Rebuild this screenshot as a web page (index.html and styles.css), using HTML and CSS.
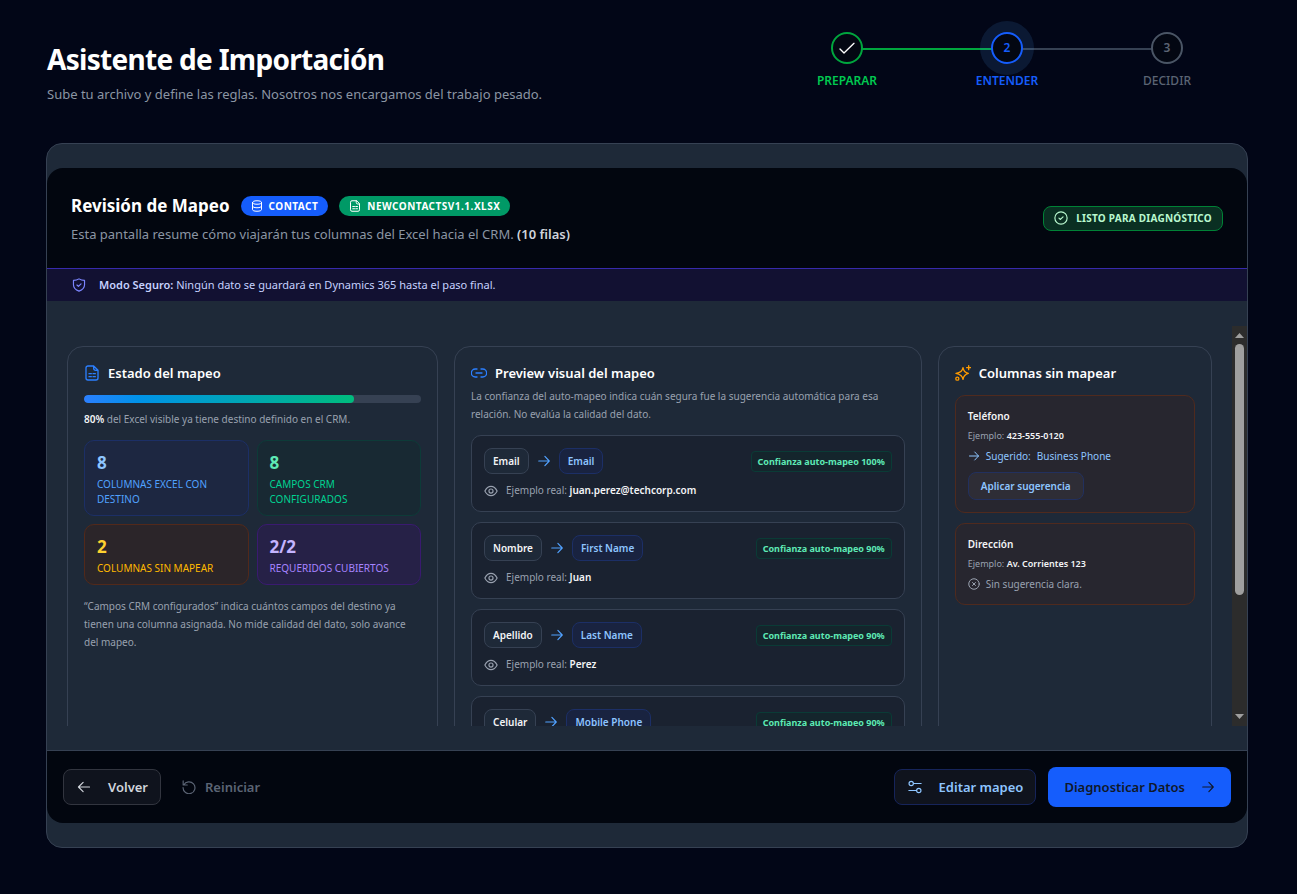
FILE: index.html
```html
<!DOCTYPE html>
<html lang="es">
<head>
  <meta charset="UTF-8" />
  <meta name="viewport" content="width=device-width, initial-scale=1.0" />
  <title>Asistente de Importación</title>
  <link rel="stylesheet" href="styles.css">
</head>
<body>

  <!-- Icon sprite -->
  <svg class="sprite" aria-hidden="true">
    <symbol id="i-check" viewBox="0 0 24 24"><path d="M1.500 13.500l6 6L22.500 5"/></symbol>
    <symbol id="i-database" viewBox="0 0 24 24"><path d="M3 5c0-2 3-3.500 9-3.500S21 3 21 5s-3 3.500-9 3.500S3 7 3 5zM3 5v14c0 2 3 3.500 9 3.500s9-1.500 9-3.500V5M3 12c0 2 3 3.500 9 3.500s9-1.500 9-3.500"/></symbol>
    <symbol id="i-sheet" viewBox="0 0 24 24"><path d="M14.500 1.500H6a3 3 0 0 0-3 3v15a3 3 0 0 0 3 3h12a3 3 0 0 0 3-3V8zM14.500 1.500V5a3 3 0 0 0 3 3H21M7.500 13H11M13.500 13H17M7.500 17.500H11M13.500 17.500H17"/></symbol>
    <symbol id="i-shield" viewBox="0 0 24 24"><path d="M12 1.500c3 2 5.500 2.700 9.500 2.700v7.300c0 5.200-3.800 8.800-9.500 11-5.700-2.200-9.500-5.800-9.500-11V4.200c4 0 6.500-.7 9.500-2.700zM8.500 12l2.500 2.500 4.500-4.500"/></symbol>
    <symbol id="i-circle-check" viewBox="0 0 24 24"><circle cx="12" cy="12" r="10.500"/><path d="M8.500 12.300l2.500 2.200 4.500-4.500"/></symbol>
    <symbol id="i-circle-x" viewBox="0 0 24 24"><circle cx="12" cy="12" r="10.500"/><path d="M9 9l6 6M15 9l-6 6"/></symbol>
    <symbol id="i-link" viewBox="0 0 24 24"><path d="M9 6H6.500a6 6 0 0 0 0 12H9M15 6h2.500a6 6 0 0 1 0 12H15M7.500 12h9"/></symbol>
    <symbol id="i-sparkles" viewBox="0 0 24 24"><path d="M12 4c.8 5.500 2.800 7.500 8 8.500-5.200 1.300-7.200 3.500-8 9-.8-5.500-4-7.700-10.500-9C8 11.500 11.200 9.500 12 4zM20.500 1v6M17.500 4h6"/><circle cx="3.500" cy="20.500" r="2.300"/></symbol>
    <symbol id="i-right" viewBox="0 0 24 24"><path d="M3 12h18M13.500 4L21 12l-7.500 8"/></symbol>
    <symbol id="i-left" viewBox="0 0 24 24"><path d="M21.500 12h-19M10.500 4L2.500 12l8 8"/></symbol>
    <symbol id="i-eye" viewBox="0 0 24 24"><path d="M1.500 12C4 7 7.500 4 12 4S20 7 22.500 12C20 17 16.500 20 12 20S4 17 1.500 12z"/><circle cx="12" cy="12" r="3.500"/></symbol>
    <symbol id="i-reset" viewBox="0 0 24 24"><path d="M2 1.500V8.500H9M3 8.500A10.200 10.200 0 1 1 1.800 13"/></symbol>
    <symbol id="i-sliders" viewBox="0 0 24 24"><circle cx="5.500" cy="6" r="3.700"/><path d="M9.500 6H22.500M1.500 18h13"/><circle cx="18.500" cy="18" r="3.700"/></symbol>
  </svg>

  <div class="page">
    <header class="page-header">
      <div class="page-title">
        <h1>Asistente de Importación</h1>
        <p>Sube tu archivo y define las reglas. Nosotros nos encargamos del trabajo pesado.</p>
      </div>

      <ol class="steps">
        <li class="step done">
          <span class="step-dot"><svg class="icon icon-16"><use href="#i-check"/></svg></span>
          <span class="step-label">PREPARAR</span>
        </li>
        <li class="step active">
          <span class="step-dot">2</span>
          <span class="step-label">ENTENDER</span>
        </li>
        <li class="step">
          <span class="step-dot">3</span>
          <span class="step-label">DECIDIR</span>
        </li>
      </ol>
    </header>

    <main class="wizard">
      <div class="wizard-head">
        <div>
          <div class="title-row">
            <h2>Revisión de Mapeo</h2>
            <span class="badge badge-blue"><svg class="icon icon-12"><use href="#i-database"/></svg>CONTACT</span>
            <span class="badge badge-green"><svg class="icon icon-12"><use href="#i-sheet"/></svg>NEWCONTACTSV1.1.XLSX</span>
          </div>
          <p class="subtitle">Esta pantalla resume cómo viajarán tus columnas del Excel hacia el CRM. <strong>(10 filas)</strong></p>
        </div>
        <span class="status"><svg class="icon icon-14"><use href="#i-circle-check"/></svg>LISTO PARA DIAGNÓSTICO</span>
      </div>

      <div class="safe-mode">
        <svg class="icon icon-14"><use href="#i-shield"/></svg>
        <p><strong>Modo Seguro:</strong> Ningún dato se guardará en Dynamics 365 hasta el paso final.</p>
      </div>

      <div class="content">
        <div class="scroller">
          <div class="panels">

            <section class="panel panel-status">
              <h3><svg class="icon icon-16"><use href="#i-sheet"/></svg>Estado del mapeo</h3>
              <div class="progress"><div class="progress-bar" style="width: 80%"></div></div>
              <p class="progress-text"><strong>80%</strong> del Excel visible ya tiene destino definido en el CRM.</p>
              <div class="stats">
                <div class="stat stat-blue"><b>8</b><span>COLUMNAS EXCEL CON DESTINO</span></div>
                <div class="stat stat-green"><b>8</b><span>CAMPOS CRM CONFIGURADOS</span></div>
                <div class="stat stat-amber"><b>2</b><span>COLUMNAS SIN MAPEAR</span></div>
                <div class="stat stat-violet"><b>2/2</b><span>REQUERIDOS CUBIERTOS</span></div>
              </div>
              <p class="note">“Campos CRM configurados” indica cuántos campos del destino ya tienen una columna asignada. No mide calidad del dato, solo avance del mapeo.</p>
            </section>

            <section class="panel panel-preview">
              <h3><svg class="icon icon-16"><use href="#i-link"/></svg>Preview visual del mapeo</h3>
              <p class="hint">La confianza del auto-mapeo indica cuán segura fue la sugerencia automática para esa relación. No evalúa la calidad del dato.</p>
              <div class="mappings">
                <div class="mapping">
                  <div class="mapping-top">
                    <span class="chip">Email</span>
                    <svg class="icon icon-14"><use href="#i-right"/></svg>
                    <span class="chip chip-crm">Email</span>
                    <span class="confidence">Confianza auto-mapeo 100%</span>
                  </div>
                  <p class="sample"><svg class="icon icon-14"><use href="#i-eye"/></svg><span>Ejemplo real: <strong>juan.perez@techcorp.com</strong></span></p>
                </div>
                <div class="mapping">
                  <div class="mapping-top">
                    <span class="chip">Nombre</span>
                    <svg class="icon icon-14"><use href="#i-right"/></svg>
                    <span class="chip chip-crm">First Name</span>
                    <span class="confidence">Confianza auto-mapeo 90%</span>
                  </div>
                  <p class="sample"><svg class="icon icon-14"><use href="#i-eye"/></svg><span>Ejemplo real: <strong>Juan</strong></span></p>
                </div>
                <div class="mapping">
                  <div class="mapping-top">
                    <span class="chip">Apellido</span>
                    <svg class="icon icon-14"><use href="#i-right"/></svg>
                    <span class="chip chip-crm">Last Name</span>
                    <span class="confidence">Confianza auto-mapeo 90%</span>
                  </div>
                  <p class="sample"><svg class="icon icon-14"><use href="#i-eye"/></svg><span>Ejemplo real: <strong>Perez</strong></span></p>
                </div>
                <div class="mapping">
                  <div class="mapping-top">
                    <span class="chip">Celular</span>
                    <svg class="icon icon-14"><use href="#i-right"/></svg>
                    <span class="chip chip-crm">Mobile Phone</span>
                    <span class="confidence">Confianza auto-mapeo 90%</span>
                  </div>
                </div>
              </div>
            </section>

            <section class="panel panel-unmapped">
              <h3><svg class="icon icon-16"><use href="#i-sparkles"/></svg>Columnas sin mapear</h3>
              <div class="unmapped-list">
                <div class="unmapped">
                  <h4>Teléfono</h4>
                  <p class="example">Ejemplo: <strong>423-555-0120</strong></p>
                  <p class="suggestion"><svg class="icon icon-12"><use href="#i-right"/></svg><span>Sugerido:</span><span>Business Phone</span></p>
                  <button type="button" class="btn-apply">Aplicar sugerencia</button>
                </div>
                <div class="unmapped">
                  <h4>Dirección</h4>
                  <p class="example">Ejemplo: <strong>Av. Corrientes 123</strong></p>
                  <p class="suggestion none"><svg class="icon icon-12"><use href="#i-circle-x"/></svg><span>Sin sugerencia clara.</span></p>
                </div>
              </div>
            </section>

          </div>
        </div>

        <div class="scrollbar" aria-hidden="true">
          <svg class="scroll-arrow" viewBox="0 0 15 18"><path d="M3 12h9L7.500 7z"/></svg>
          <div class="scroll-track"><div class="scroll-thumb" style="height: 69%"></div></div>
          <svg class="scroll-arrow" viewBox="0 0 15 18"><path d="M3 6h9l-4.500 5z"/></svg>
        </div>
      </div>

      <footer class="wizard-foot">
        <div class="actions">
          <button type="button" class="btn btn-outline"><svg class="icon icon-14"><use href="#i-left"/></svg>Volver</button>
          <button type="button" class="btn btn-ghost"><svg class="icon icon-14"><use href="#i-reset"/></svg>Reiniciar</button>
        </div>
        <div class="actions">
          <button type="button" class="btn btn-outline btn-edit"><svg class="icon icon-14"><use href="#i-sliders"/></svg>Editar mapeo</button>
          <button type="button" class="btn btn-primary">Diagnosticar Datos<svg class="icon icon-14"><use href="#i-right"/></svg></button>
        </div>
      </footer>
    </main>
  </div>

</body>
</html>
```

FILE: styles.css
```css
* {
  box-sizing: border-box;
}
body {
  margin: 0;
  min-height: 100vh;
  background: #020617;
  color: #f3f4f6;
  font-family: "Noto Sans", "Segoe UI", sans-serif;
  font-size: 13px;
  line-height: 20px;
}
h1, h2, h3, h4, p, ol {
  margin: 0;
  padding: 0;
}
strong {
  font-weight: 600;
}
button {
  font-family: inherit;
  cursor: pointer;
}
.sprite {
  display: none;
}
.icon {
  flex: none;
  fill: none;
  stroke: currentColor;
  stroke-width: 2;
  stroke-linecap: round;
  stroke-linejoin: round;
}
.icon-12 { width: 12px; height: 12px; }
.icon-14 { width: 14px; height: 14px; }
.icon-16 { width: 16px; height: 16px; }

/* Page header */
.page {
  padding: 32px 49px 46px 46px;
}
.page-header {
  display: flex;
  justify-content: space-between;
  align-items: flex-start;
  padding: 0 1px;
  margin-bottom: 39px;
}
.page-title {
  padding-top: 7px;
}
.page-title h1 {
  font-size: 28px;
  line-height: 40px;
  font-weight: 700;
  letter-spacing: -0.025em;
  color: #fff;
}
.page-title p {
  margin-top: 5px;
  color: #8b95a3;
}

/* Steps */
.steps {
  display: flex;
  list-style: none;
}
.step {
  position: relative;
  width: 160px;
  display: flex;
  flex-direction: column;
  align-items: center;
  gap: 9px;
  color: #5b6474;
}
.step + .step::before {
  content: "";
  position: absolute;
  top: 16px;
  right: 50%;
  width: 100%;
  height: 2px;
  background: #364153;
}
.step.active::before {
  background: #00a63e;
}
.step-dot {
  position: relative;
  z-index: 1;
  width: 32px;
  height: 32px;
  display: flex;
  align-items: center;
  justify-content: center;
  border: 2px solid #4a5565;
  border-radius: 50%;
  background: #030712;
  font-size: 12px;
  font-weight: 600;
}
.step-label {
  position: relative;
  z-index: 1;
  font-size: 12px;
  line-height: 16px;
  font-weight: 500;
}
.step.done {
  color: #00c950;
}
.done .step-dot {
  border-color: #00a63e;
  color: #fff;
}
.step.active {
  color: #155dfc;
}
.active .step-dot {
  border-color: #155dfc;
  box-shadow: 0 0 0 11px rgba(81, 162, 255, 0.12);
}
.done .step-label,
.active .step-label {
  font-weight: 600;
}

/* Wizard card */
.wizard {
  padding: 24px 0;
  border: 1px solid #364153;
  border-radius: 16px;
  background: #1e2938;
  overflow: hidden;
}
.wizard-head {
  display: flex;
  justify-content: space-between;
  align-items: center;
  padding: 24px;
  border-radius: 16px 16px 0 0;
  background: #02060f;
}
.title-row {
  display: flex;
  align-items: center;
  gap: 11px;
}
.title-row h2 {
  font-size: 17px;
  line-height: 28px;
  font-weight: 700;
  color: #fff;
}
.badge {
  display: inline-flex;
  align-items: center;
  gap: 6px;
  height: 20px;
  padding: 0 10px;
  border-radius: 10px;
  font-size: 10px;
  font-weight: 700;
  letter-spacing: 0.05em;
  color: #fff;
}
.badge-blue { background: #155dfc; }
.badge-green { background: #009966; }
.subtitle {
  margin-top: 4px;
  color: #8b95a3;
}
.subtitle strong {
  color: #d1d5dc;
}
.status {
  display: inline-flex;
  align-items: center;
  gap: 8px;
  padding: 4px 10px;
  border: 1px solid #008236;
  border-radius: 8px;
  background: #0a2f22;
  color: #b9f8cf;
  font-size: 10px;
  line-height: 15px;
  font-weight: 700;
  letter-spacing: 0.025em;
}
.safe-mode {
  display: flex;
  align-items: center;
  gap: 13px;
  padding: 8px 25px;
  border-top: 1px solid #372aac;
  background: #121132;
  color: #c6d2ff;
  font-size: 11px;
  line-height: 16px;
}
.safe-mode .icon {
  color: #7c86ff;
}

/* Scrollable content */
.content {
  display: flex;
  height: 400px;
  margin: 25px 0 24px;
}
.scroller {
  flex: 1;
  padding: 20px;
  overflow-y: auto;
  scrollbar-width: none;
}
.scrollbar {
  flex: none;
  width: 15px;
  display: flex;
  flex-direction: column;
  background: #2c2c2c;
}
.scroll-arrow {
  height: 18px;
  fill: #9f9f9f;
}
.scroll-track {
  flex: 1;
  padding: 0 3px;
}
.scroll-thumb {
  border-radius: 5px;
  background: #9f9f9f;
}
.panels {
  display: grid;
  grid-template-columns: repeat(12, 1fr);
  gap: 16px;
  min-height: 543px;
}
.panel {
  padding: 16px;
  border: 1px solid #364153;
  border-radius: 16px;
}
.panel-status { grid-column: span 4; }
.panel-preview { grid-column: span 5; }
.panel-unmapped { grid-column: span 3; }
.panel h3 {
  display: flex;
  align-items: center;
  gap: 8px;
  font-size: 13px;
  line-height: 20px;
  font-weight: 600;
  color: #fff;
}
.panel h3 .icon {
  color: #2b7fff;
}

/* Mapping status */
.progress {
  height: 8px;
  margin-top: 12px;
  border-radius: 4px;
  background: #364153;
  overflow: hidden;
}
.progress-bar {
  height: 100%;
  border-radius: 4px;
  background: linear-gradient(to right, #2b7fff, #0092e8 20%, #00bc7d);
}
.progress-text {
  margin: 8px 0 12px;
  font-size: 10px;
  line-height: 17px;
  color: #99a1af;
}
.progress-text strong {
  color: #f3f4f6;
}
.stats {
  display: grid;
  grid-template-columns: 1fr 1fr;
  gap: 8px;
}
.stat {
  padding: 8px 12px;
  border: 1px solid;
  border-radius: 10px;
}
.stat b {
  display: block;
  font-size: 17px;
  line-height: 28px;
}
.stat span {
  display: block;
  font-size: 10px;
  line-height: 15px;
}
.stat-blue { background: #1d2741; border-color: #1c2f66; color: #51a2ff; }
.stat-blue b { color: #8ec5ff; }
.stat-green { background: #182933; border-color: #0d3b38; color: #00d492; }
.stat-green b { color: #5ee9b5; }
.stat-amber { background: #2b2529; border-color: #52291a; color: #ffb900; }
.stat-amber b { color: #ffd230; }
.stat-violet { background: #262147; border-color: #3a1a70; color: #a684ff; }
.stat-violet b { color: #c4b4ff; }
.note {
  margin-top: 12px;
  font-size: 10px;
  line-height: 18px;
  color: #99a1af;
}

/* Mapping preview */
.hint {
  margin-top: 4px;
  font-size: 10px;
  line-height: 18px;
  color: #99a1af;
}
.mappings {
  display: flex;
  flex-direction: column;
  gap: 10px;
  margin-top: 12px;
}
.mapping {
  padding: 12px;
  border: 1px solid #364153;
  border-radius: 10px;
  background: #1a2230;
}
.mapping-top {
  display: flex;
  align-items: center;
  gap: 8px;
  color: #51a2ff;
}
.chip {
  padding: 4px 8px;
  border: 1px solid #364153;
  border-radius: 8px;
  background: #1e2938;
  color: #f3f4f6;
  font-size: 10px;
  line-height: 16px;
  font-weight: 600;
}
.chip-crm {
  border-color: #1c2f66;
  background: #192340;
  color: #8ec5ff;
}
.confidence {
  margin-left: auto;
  padding: 2px 6px;
  border: 1px solid #0a3b36;
  border-radius: 4px;
  background: #14252c;
  color: #5ee9b5;
  font-size: 9px;
  line-height: 15px;
  font-weight: 700;
}
.sample {
  display: flex;
  align-items: center;
  gap: 8px;
  margin-top: 8px;
  font-size: 10px;
  line-height: 17px;
  color: #99a1af;
}
.sample strong {
  color: #f3f4f6;
}

/* Unmapped columns */
.panel-unmapped h3 .icon {
  color: #fe9a00;
}
.unmapped-list {
  display: flex;
  flex-direction: column;
  gap: 10px;
  margin-top: 12px;
}
.unmapped {
  display: flex;
  flex-direction: column;
  align-items: flex-start;
  gap: 4px;
  padding: 12px;
  border: 1px solid #4f2a1e;
  border-radius: 10px;
  background: #27262f;
  font-size: 10px;
  line-height: 16px;
}
.unmapped h4 {
  font-size: 10px;
  font-weight: 600;
}
.example {
  font-size: 9px;
  color: #99a1af;
}
.example strong {
  color: #f3f4f6;
}
.suggestion {
  display: flex;
  align-items: center;
  gap: 6px;
  color: #8ec5ff;
}
.suggestion.none {
  color: #99a1af;
}
.btn-apply {
  height: 28px;
  margin-top: 4px;
  padding: 0 12px;
  border: 1px solid #22305e;
  border-radius: 8px;
  background: #2e2d36;
  color: #8ec5ff;
  font-size: 10px;
  font-weight: 600;
}

/* Footer actions */
.wizard-foot {
  display: flex;
  justify-content: space-between;
  align-items: center;
  padding: 16px;
  border-top: 1px solid #364153;
  border-radius: 0 0 16px 16px;
  background: #02060f;
}
.actions {
  display: flex;
  align-items: center;
  gap: 12px;
}
.btn {
  display: inline-flex;
  align-items: center;
  height: 36px;
  border: 1px solid transparent;
  border-radius: 8px;
  font-size: 13px;
  font-weight: 600;
}
.btn-outline {
  gap: 17px;
  padding: 0 12px 0 13px;
  border-color: #32353f;
  background: #0f131d;
  color: #d1d5dc;
}
.btn-edit {
  border-color: #16245a;
  color: #8ec5ff;
}
.btn-ghost {
  gap: 9px;
  padding: 0 8px;
  background: transparent;
  color: #5b6474;
}
.btn-primary {
  gap: 16px;
  height: 40px;
  padding: 0 15px;
  background: #155dfc;
  color: #101828;
}
```
